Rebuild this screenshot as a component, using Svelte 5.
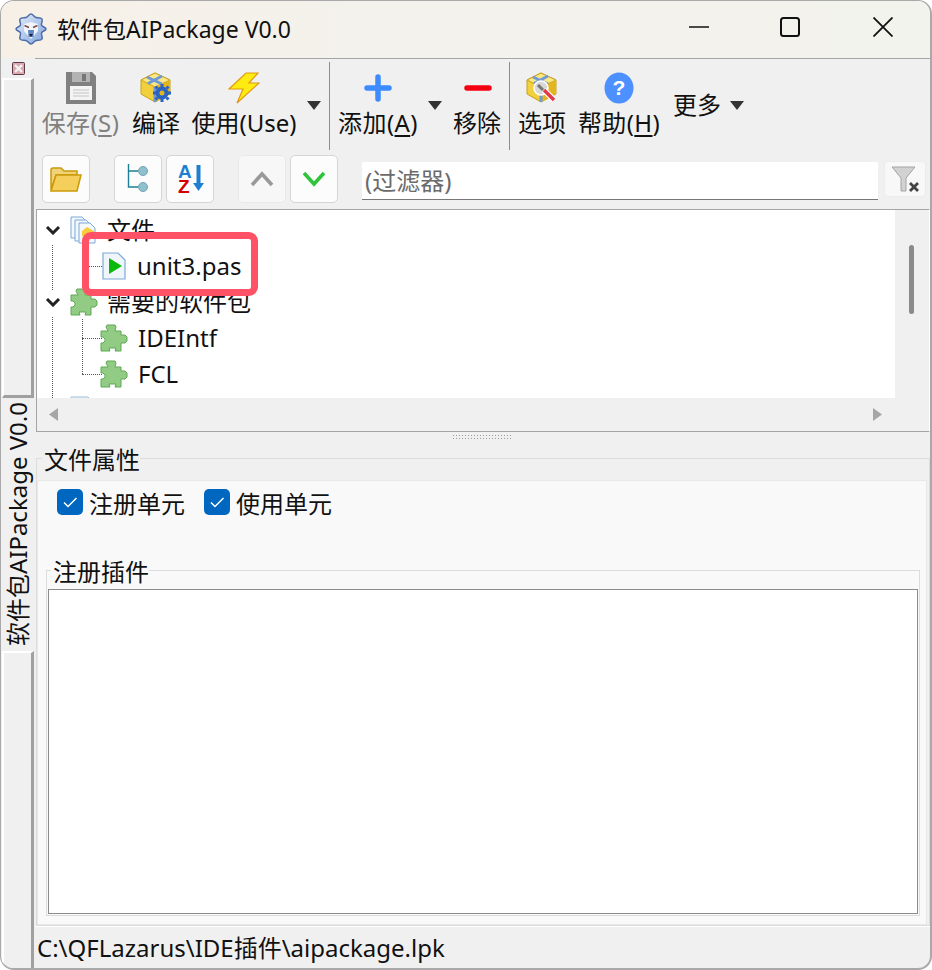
<script>
  const puzzle = "M7 1 H15 L16 3 L15 7 H21 V11 H25 L27 13 V17 L25 19 H21 V27 H15 L16 24 H9 L10 27 H1 V19 H3 L5 17 V15 L3 13 H1 V7 H8 L6 3 Z";
</script>

{#snippet cube()}
  <path d="M15 1 L30 8 L30 22 L15 30 L1 22 L1 8 Z" fill="#f2cf3c" stroke="#c9a21c" />
  <path d="M1 8 L15 15 L30 8 L15 1 Z" fill="#fbe884" stroke="#c9a21c" />
  <path d="M15 15 L15 30 L30 22 L30 8 Z" fill="#e3b51f" />
  <path d="M7 5 L22 12 M22 4 L8 11.500" stroke="#6f9bd8" stroke-width="3" fill="none" />
  <path d="M15 15 L15 30" stroke="#6f9bd8" stroke-width="3" />
{/snippet}

{#snippet puzzleIcon(cls)}
  <svg class={cls} viewBox="0 0 28 28"><path d={puzzle} fill="#92cc84" stroke="#5fa955" stroke-width="1" /></svg>
{/snippet}

{#snippet chevron()}
  <svg class="chev" viewBox="0 0 16 10"><path d="M2 2 L8 8 L14 2" fill="none" stroke="#222" stroke-width="3" /></svg>
{/snippet}

{#snippet arrow()}
  <svg class="drop" viewBox="0 0 14 9"><path d="M0 0 H14 L7 9 Z" fill="#333" /></svg>
{/snippet}

<div class="window">
  <header class="titlebar">
    <svg class="logo" viewBox="0 0 32 32">
      <defs>
        <linearGradient id="lg" x1="0" y1="0" x2="1" y2="1"><stop offset="0" stop-color="#e6eefa" /><stop offset="1" stop-color="#7ea3dc" /></linearGradient>
      </defs>
      <path d="M16 1 C18 1 19 4 21 4.500 C23 5 26 4 27 6 C28 8 26 10 26.500 12 C27 14 31 14 31 16 C31 18 27 18 26.500 20 C26 22 28 24 27 26 C26 28 23 27 21 27.500 C19 28 18 31 16 31 C14 31 13 28 11 27.500 C9 27 6 28 5 26 C4 24 6 22 5.500 20 C5 18 1 18 1 16 C1 14 5 14 5.500 12 C6 10 4 8 5 6 C6 4 9 5 11 4.500 C13 4 14 1 16 1 Z" fill="url(#lg)" stroke="#4d6ea8" stroke-width="1.500" />
      <path d="M9 11 L16 9 L23 11 L23 18 L16 26 L9 18 Z" fill="#f1f5fb" />
      <path d="M13 17 L19 17 L18.500 24 L13.500 24 Z" fill="#5f86c4" />
      <path d="M9.500 12.500 L14 14.500 M22.500 12.500 L18 14.500" stroke="#7a4a40" stroke-width="1.400" />
      <path d="M14 21 H18 L16 24 Z" fill="#1c2233" />
    </svg>
    <span class="title">软件包AIPackage V0.0</span>
    <div class="controls">
      <svg class="ctl c-min" viewBox="0 0 20 20"><path d="M0 10 H20" stroke="#111" stroke-width="1.600" /></svg>
      <svg class="ctl c-max" viewBox="0 0 20 20"><rect x="1" y="1" width="18" height="18" rx="2.500" fill="none" stroke="#111" stroke-width="2" /></svg>
      <svg class="ctl c-close" viewBox="0 0 20 20"><path d="M0.500 0.500 L19.500 19.500 M19.500 0.500 L0.500 19.500" stroke="#111" stroke-width="1.800" /></svg>
    </div>
  </header>

  <div class="body">
    <aside class="dock">
      <div class="dock-close">
        <svg viewBox="0 0 13 13"><rect x="0.500" y="0.500" width="12" height="12" rx="1" fill="#dca7ae" stroke="#5a3a48" /><path d="M3 3 L10 10 M10 3 L3 10" stroke="#f2f2f2" stroke-width="2.400" /></svg>
      </div>
      <div class="tab upper"></div>
      <div class="tab-active"><span>软件包AIPackage V0.0</span></div>
      <div class="tab lower"></div>
    </aside>

    <main class="main">
      <div class="toolbar">
        <div class="tool w-save disabled">
          <svg class="ic" viewBox="0 0 30 32">
            <path d="M0 0 H26 L30 4 V32 H0 Z" fill="#808080" />
            <rect x="6" y="0" width="18" height="10" fill="#b3b3b3" /><rect x="16" y="2" width="4" height="7" fill="#777" />
            <rect x="4" y="14" width="22" height="14" fill="#f4f4f4" />
            <path d="M7 18 H23 M7 21 H23 M7 24 H23" stroke="#c4c4c4" />
          </svg>
          <span class="lbl wide">保存(<u>S</u>)</span>
        </div>
        <div class="tool w-compile">
          <svg class="ic" viewBox="0 0 32 32">
            {@render cube()}
            <g fill="none" stroke="#2a63c4">
              <circle cx="22" cy="21" r="4.500" stroke-width="4" />
              <path d="M22 12 V15 M22 27 V30 M13 21 H16 M28 21 H31 M15.500 14.500 L17.500 16.500 M26.500 25.500 L28.500 27.500 M28.500 14.500 L26.500 16.500 M17.500 25.500 L15.500 27.500" stroke-width="3" />
            </g>
          </svg>
          <span class="lbl">编译</span>
        </div>
        <div class="tool w-use">
          <svg class="ic" viewBox="0 0 32 32"><path d="M18 1 H30 L21 11 H31 L9 31 L15 17 H1 Z" fill="#ffeb12" stroke="#e09a12" stroke-width="1.200" /></svg>
          <span class="lbl">使用(Use)</span>
        </div>
        <div class="arrow-wrap a-use">{@render arrow()}</div>
        <div class="sep s-one"></div>
        <div class="tool w-add">
          <svg class="ic" viewBox="0 0 32 32"><path d="M16 5 V27 M5 16 H27" stroke="#3d8bff" stroke-width="5.500" stroke-linecap="round" /></svg>
          <span class="lbl wide">添加(<u>A</u>)</span>
        </div>
        <div class="arrow-wrap a-add">{@render arrow()}</div>
        <div class="tool w-remove">
          <svg class="ic" viewBox="0 0 32 32"><path d="M6 16 H28" stroke="#f5000f" stroke-width="5.500" stroke-linecap="round" /></svg>
          <span class="lbl">移除</span>
        </div>
        <div class="sep s-two"></div>
        <div class="tool w-options">
          <svg class="ic" viewBox="0 0 32 32">
            {@render cube()}
            <circle cx="15" cy="16" r="7" fill="#d8d8d8" stroke="#fff" stroke-width="1.500" />
            <path d="M12 13 L17 18" stroke="#777" stroke-width="3" />
            <path d="M18 18 L28 28" stroke="#fff" stroke-width="6" />
            <path d="M18 18 L28 28" stroke="#e23a4a" stroke-width="3.500" />
          </svg>
          <span class="lbl">选项</span>
        </div>
        <div class="tool w-help">
          <svg class="ic" viewBox="0 0 30 32">
            <ellipse cx="15" cy="16" rx="14.500" ry="15.500" fill="#4d90ff" />
            <text x="15" y="23" text-anchor="middle" class="qm">?</text>
          </svg>
          <span class="lbl wide">帮助(<u>H</u>)</span>
        </div>
        <div class="more"><span class="lbl">更多</span>{@render arrow()}</div>
      </div>

      <div class="row2">
        <button class="sq b-open" aria-label="open">
          <svg viewBox="0 0 32 26" class="i32">
            <path d="M1 24 V4 Q1 2 3 2 H11 L14 5 H27 V9 H6 Z" fill="#f0d277" stroke="#c99a09" stroke-width="1.500" />
            <path d="M1 25 L6 9 H31 L27 25 Z" fill="#f5cf5c" stroke="#c99a09" stroke-width="1.500" />
          </svg>
        </button>
        <button class="sq b-tree" aria-label="tree">
          <svg viewBox="0 0 22 32" class="i-tree">
            <path d="M1.500 1 V24 H11 M1.500 8 H11" fill="none" stroke="#1b7f95" stroke-width="1.400" />
            <circle cx="16" cy="8" r="4.500" fill="#8fc1cd" stroke="#6fa5b3" /><circle cx="16" cy="24" r="4.500" fill="#8fc1cd" stroke="#6fa5b3" />
          </svg>
        </button>
        <button class="sq b-sort" aria-label="sort">
          <svg viewBox="0 0 28 32" class="i-sort">
            <text x="2" y="15" class="az a">A</text>
            <text x="2" y="30" class="az z">Z</text>
            <path d="M22.500 2 V22" stroke="#1e7fd1" stroke-width="4" /><path d="M17 20 H28 L22.500 28 Z" fill="#1e7fd1" />
          </svg>
        </button>
        <button class="sq b-up off" aria-label="up">
          <svg viewBox="0 0 24 16" class="i-chev"><path d="M2 14 L12 3 L22 14" fill="none" stroke="#999" stroke-width="3.600" /></svg>
        </button>
        <button class="sq b-down" aria-label="down">
          <svg viewBox="0 0 24 16" class="i-chev"><path d="M2 2 L12 13 L22 2" fill="none" stroke="#2fc43a" stroke-width="3.600" /></svg>
        </button>
        <div class="filter">(过滤器)</div>
        <button class="clear" aria-label="clear">
          <svg viewBox="0 0 30 28" class="i-funnel">
            <path d="M2 2 H25 L16 13 V26 H11 V13 Z" fill="#d2d2d2" stroke="#a4a4a4" />
            <path d="M20 18 L28 26 M28 18 L20 26" stroke="#444" stroke-width="2.800" />
          </svg>
        </button>
      </div>

      <section class="treebox">
        <div class="tree-top">
          <div class="tree">
            <span class="dots v-a"></span><span class="dots v-b"></span><span class="dots v-c"></span>
            <div class="node">
              {@render chevron()}
              <svg class="nicon" viewBox="0 0 28 28">
                <path d="M1 1 H12 L17 6 V22 H1 Z" fill="#f3f8fd" stroke="#7fa9d8" />
                <path d="M5 4 H16 L21 9 V25 H5 Z" fill="#f3f8fd" stroke="#7fa9d8" />
                <path d="M9 7 H20 L25 12 V27 H9 Z" fill="#f3f8fd" stroke="#7fa9d8" />
                <path d="M17 11 L24 15 V20 L17 24 L12 20 V15 Z" fill="#f6cd3d" />
              </svg>
              <span class="ntext">文件</span>
            </div>
            <div class="node child">
              <span class="dash"></span>
              <svg class="nicon doc" viewBox="0 0 24 28">
                <path d="M1 1 H16 L23 8 V27 H1 Z" fill="#eef5fb" stroke="#7fa9d8" stroke-width="1.200" />
                <path d="M7 6 L20 14 L7 22 Z" fill="#0bb80b" />
              </svg>
              <span class="ntext">unit3.pas</span>
            </div>
            <div class="node">
              {@render chevron()}
              {@render puzzleIcon("nicon")}
              <span class="ntext">需要的软件包</span>
            </div>
            <div class="node child">
              <span class="dash"></span>
              {@render puzzleIcon("nicon")}
              <span class="ntext">IDEIntf</span>
            </div>
            <div class="node child">
              <span class="dash"></span>
              {@render puzzleIcon("nicon")}
              <span class="ntext">FCL</span>
            </div>
            <div class="node peek">
              <svg class="nicon" viewBox="0 0 28 28"><path d="M1 1 H18 L24 7 V27 H1 Z" fill="#f3f8fd" stroke="#9db9d8" /></svg>
            </div>
          </div>
          <div class="vscroll"><span class="thumb"></span></div>
        </div>
        <div class="hscroll">
          <svg class="harrow" viewBox="0 0 9 13"><path d="M9 0 V13 L0 6.500 Z" fill="#a6a6a6" /></svg>
          <svg class="harrow" viewBox="0 0 9 13"><path d="M0 0 V13 L9 6.500 Z" fill="#a6a6a6" /></svg>
        </div>
        <div class="highlight"></div>
      </section>

      <div class="splitter"><span class="grip"></span></div>

      <fieldset class="props">
        <legend>文件属性</legend>
        <div class="props-inner">
          <div class="checks">
            <label class="chk"><span class="box"><svg viewBox="0 0 26 26"><path d="M7 13.500 L11 17.500 L19.500 9" fill="none" stroke="#fff" stroke-width="1.500" /></svg></span>注册单元</label>
            <label class="chk"><span class="box"><svg viewBox="0 0 26 26"><path d="M7 13.500 L11 17.500 L19.500 9" fill="none" stroke="#fff" stroke-width="1.500" /></svg></span>使用单元</label>
          </div>
          <fieldset class="plugins">
            <legend>注册插件</legend>
            <div class="list"></div>
          </fieldset>
        </div>
      </fieldset>

      <footer class="status">C:\QFLazarus\IDE插件\aipackage.lpk</footer>
    </main>
  </div>
</div>

<style>
  :global(body) { margin: 0; background: #fff; }
  .window {
    width: 932px; height: 970px; box-sizing: border-box; overflow: hidden;
    border: 1px solid #a9a9a9; border-width: 1px 2px 2px 1px; border-radius: 14px;
    background: #f0f0f0; display: flex; flex-direction: column; position: relative;
    font-family: "Noto Sans", "Noto Sans CJK SC", sans-serif; font-size: 24px; color: #111;
  }
  .titlebar {
    height: 57px; flex: none; display: flex; align-items: center;
    background: linear-gradient(90deg, #f7f0e7, #f3f2ed 45%, #f3f3ee);
  }
  .logo { width: 32px; height: 32px; margin-left: 14px; margin-top: -1px; }
  .title { margin-left: 10px; font-size: 23px; line-height: 30px; margin-top: -1px; white-space: nowrap; }
  .controls { margin-left: auto; display: flex; margin-right: 37px; margin-top: -5px; }
  .ctl { width: 20px; height: 20px; display: block; }
  .c-max { margin-left: 71px; }
  .c-close { margin-left: 73px; }

  .body { flex: 1; display: flex; min-height: 0; }
  .dock { width: 34px; flex: none; display: flex; flex-direction: column; }
  .dock-close { height: 19px; padding: 4px 0 0 11px; box-sizing: border-box; flex: none; }
  .dock-close svg { width: 13px; height: 13px; display: block; }
  .tab { margin-left: 1px; width: 32px; box-sizing: border-box; background: #f0f0f0; border-top: 2px solid #fff; border-left: 2px solid #fff; border-right: 3px solid #a0a0a0; border-bottom: 3px solid #a0a0a0; }
  .upper { height: 320px; margin-top: 1px; }
  .lower { flex: 1; border-bottom: none; }
  .tab-active { height: 253px; flex: none; margin-left: 2px; width: 30px; display: flex; align-items: center; justify-content: center; }
  .tab-active span { writing-mode: vertical-rl; text-orientation: sideways; transform: rotate(180deg); font-size: 24px; line-height: 30px; white-space: nowrap; }

  .main { flex: 1; min-width: 0; display: flex; flex-direction: column; border-top: 1px solid #a6a6a6; }
  .toolbar { height: 91px; flex: none; display: flex; align-items: flex-start; }
  .tool { display: flex; flex-direction: column; align-items: center; padding-top: 13px; flex: none; }
  .ic { width: 32px; height: 32px; display: block; }
  .lbl { line-height: 34px; margin-top: 2px; white-space: nowrap; display: block; }
  .wide { letter-spacing: 0.4px; }
  .lbl u { text-underline-offset: 3px; text-decoration-thickness: 1.500px; }
  .disabled { color: #808080; }
  .w-save { width: 77px; margin-left: 7px; }
  .w-compile { width: 48px; margin-left: 13px; }
  .w-use { width: 106px; margin-left: 11px; }
  .arrow-wrap { flex: none; padding-top: 42px; }
  .a-use { margin-left: 10px; }
  .a-add { margin-left: 10px; }
  .drop { width: 14px; height: 9px; display: block; }
  .sep { width: 1px; height: 88px; background: #8c8c8c; margin-top: 3px; flex: none; }
  .s-one { margin-left: 8px; }
  .w-add { width: 80px; margin-left: 8px; }
  .w-remove { width: 48px; margin-left: 11px; }
  .s-two { margin-left: 8px; }
  .w-options { width: 48px; margin-left: 8px; }
  .w-help { width: 82px; margin-left: 12px; }
  .more { display: flex; align-items: center; gap: 9px; margin-left: 13px; padding-top: 29px; }
  .more .lbl { margin-top: 0; }

  .row2 { height: 59px; flex: none; display: flex; align-items: flex-start; padding: 5px 0 0 7px; box-sizing: border-box; }
  .sq {
    width: 48px; height: 48px; flex: none; padding: 0; box-sizing: border-box; background: #fcfcfc;
    border: 1px solid #d5d5d5; border-radius: 5px; display: flex; align-items: center; justify-content: center;
  }
  .off { background: #f7f7f7; border-color: #e8e8e8; }
  .b-tree { margin-left: 24px; }
  .b-sort { margin-left: 4px; }
  .b-up { margin-left: 24px; }
  .b-down { margin-left: 4px; }
  .i32 { width: 32px; height: 26px; }
  .i-tree { width: 22px; height: 32px; }
  .i-sort { width: 28px; height: 32px; overflow: visible; }
  .i-chev { width: 24px; height: 16px; }
  .az { font-family: "Liberation Sans", sans-serif; font-weight: 700; font-size: 19px; }
  .a { fill: #1e7fd1; }
  .z { fill: #d40000; }
  .filter {
    width: 516px; height: 38px; margin-left: 24px; margin-top: 7px; box-sizing: border-box; flex: none;
    background: #fff; border-bottom: 1px solid #777; color: #6b6b6b; padding-left: 3px; line-height: 38px;
  }
  .clear {
    width: 42px; height: 36px; margin-left: 6px; margin-top: 6px; padding: 0; flex: none; background: #f8f8f8;
    border: 1px solid #ececec; border-radius: 4px; display: flex; align-items: center; justify-content: center;
  }
  .i-funnel { width: 30px; height: 28px; }
  .qm { fill: #fff; font-family: "Liberation Sans", sans-serif; font-weight: 700; font-size: 21px; }

  .treebox { height: 223px; flex: none; margin-left: 1px; box-sizing: border-box; border: 1px solid #a5a5a5; border-right-color: #fff; border-bottom-color: #a5a5a5; display: flex; flex-direction: column; position: relative; }
  .tree-top { flex: 1; display: flex; min-height: 0; }
  .tree { flex: 1; background: #fff; position: relative; overflow: hidden; padding-top: 2px; }
  .node { height: 36px; display: flex; align-items: center; position: relative; }
  .chev { width: 16px; height: 10px; margin-left: 8px; flex: none; }
  .nicon { width: 28px; height: 28px; margin-left: 9px; flex: none; }
  .ntext { margin-left: 9px; white-space: nowrap; line-height: 36px; }
  .child { padding-left: 56px; }
  .child .nicon { margin-left: 7px; margin-right: -1px; }
  .child .doc { width: 24px; margin-left: 9px; margin-right: 0; }
  .child .ntext { margin-left: 11px; }
  .peek { padding-left: 24px; align-items: flex-start; padding-top: 4px; box-sizing: border-box; }
  .dash { position: absolute; left: 45px; top: 18px; width: 20px; border-top: 1px dotted #555; }
  .dots { position: absolute; border-left: 1px dotted #555; width: 0; }
  .v-a { left: 15px; top: 35px; height: 45px; }
  .v-b { left: 15px; top: 107px; height: 85px; }
  .v-c { left: 45px; top: 109px; height: 55px; }
  .vscroll { width: 34px; flex: none; background: #f0f0f0; position: relative; }
  .thumb { position: absolute; left: 14px; top: 35px; width: 5px; height: 69px; border-radius: 3px; background: #8a8a8a; }
  .hscroll { height: 33px; flex: none; background: #f0f0f0; display: flex; align-items: center; justify-content: space-between; padding: 0 47px 0 12px; }
  .harrow { width: 9px; height: 13px; display: block; }
  .highlight { position: absolute; left: 45px; top: 22px; width: 176px; height: 64px; box-sizing: border-box; border: 7px solid #ff5266; border-radius: 9px; }

  .splitter { height: 14px; flex: none; position: relative; margin-left: 1px; }
  .grip { position: absolute; left: 416px; top: 2px; width: 60px; height: 7px; background: radial-gradient(circle, #9c9c9c 0.8px, transparent 1px) 0 0 / 3px 3px; }

  .props { flex: 1; min-height: 0; margin: 0 0 0 1px; padding: 0 2px 0 0; border: 1px solid #dcdcdc; display: flex; flex-direction: column; min-width: 0; }
  legend { padding: 0 0 0 2px; margin-left: 5px; line-height: 28px; height: 24px; }
  .props-inner { flex: 1; min-height: 0; margin-top: 10px; background: #f9f9f9; border: 1px solid #e8e8e8; box-sizing: border-box; display: flex; flex-direction: column; padding: 8px 6px 8px 8px; }
  .checks { display: flex; gap: 19px; height: 60px; flex: none; align-items: flex-start; padding-left: 11px; }
  .chk { display: flex; align-items: flex-start; gap: 6px; line-height: 30px; white-space: nowrap; }
  .box { width: 26px; height: 26px; border-radius: 5px; background: #0067c0; display: block; }
  .box svg { width: 26px; height: 26px; display: block; }
  .plugins { flex: 1; min-height: 0; margin: 12px 0 0; padding: 0 1px 1px; border: 1px solid #dcdcdc; display: flex; flex-direction: column; min-width: 0; }
  .plugins legend { margin-left: 3px; height: 19px; line-height: 22px; }
  .list { height: 325px; box-sizing: border-box; background: #fff; border: 1px solid #8c8c8c; margin-top: 9px; flex: none; }
  .status { height: 41px; flex: none; padding-left: 2px; line-height: 42px; border-top: 1px solid #fff; white-space: nowrap; }
</style>
